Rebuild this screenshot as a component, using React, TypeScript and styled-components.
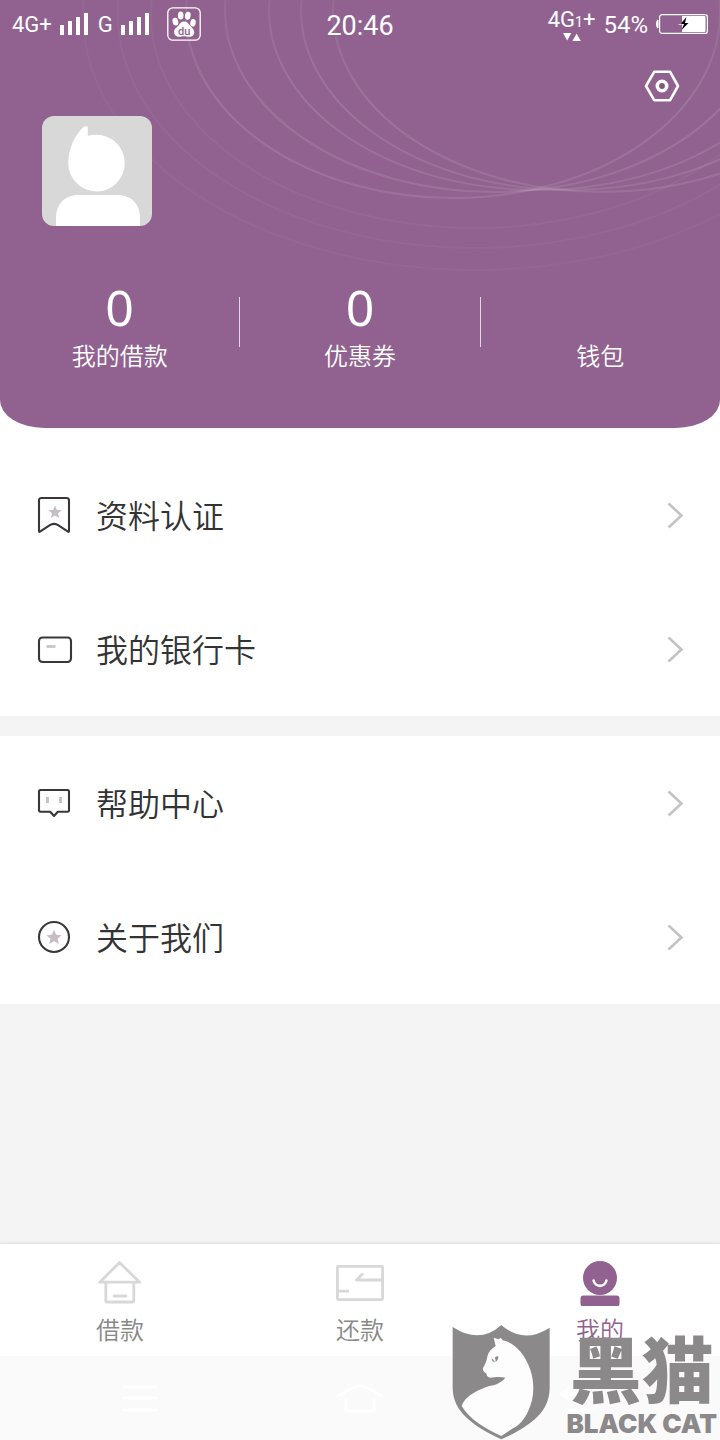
import React from 'react';
import styled, { createGlobalStyle } from 'styled-components';

const purple = '#91628f';
const ink = '#333333';
const cjk = '"Noto Sans CJK SC", sans-serif';
const latin = 'Roboto, Inter, sans-serif';

const GlobalStyle = createGlobalStyle`
  *, *::before, *::after { box-sizing: border-box; }
  body { margin: 0; background: #f4f4f4; font-family: ${cjk}; }
  a { color: inherit; text-decoration: none; }
  button { border: 0; padding: 0; background: none; color: inherit; font: inherit; cursor: pointer; }
  svg { display: block; flex: none; }
`;

const Page = styled.div`
  position: relative;
  display: flex;
  flex-direction: column;
  min-height: 100vh;
  overflow: hidden;
`;

const HeaderBackdrop = styled.div`
  background: #ffffff;
`;

const Header = styled.header`
  position: relative;
  overflow: hidden;
  padding-bottom: 57px;
  border-radius: 0 0 44px 44px / 0 0 28px 28px;
  background: ${purple};
  color: #ffffff;
`;

const Rings = styled.svg`
  position: absolute;
  inset: 0;
  width: 100%;
  height: 100%;
`;

const StatusBar = styled.div`
  position: relative;
  display: grid;
  grid-template-columns: 1fr auto 1fr;
  align-items: center;
  height: 48px;
  padding: 0 12px;
  font-family: ${latin};
  font-size: 24px;
  line-height: 28px;
`;

const StatusGroup = styled.div<{ $end?: boolean }>`
  display: flex;
  align-items: center;
  justify-content: ${(p) => (p.$end ? 'flex-end' : 'flex-start')};
  gap: ${(p) => (p.$end ? 8 : 10)}px;
`;

const StatusText = styled.span`
  padding-top: 2px;
`;

const Signal = styled.span`
  display: flex;
  align-items: center;
  gap: 8px;
  font-size: 22px;
`;

const AppBadge = styled.span`
  padding-left: 8px;
`;

const Clock = styled.time`
  padding-top: 4px;
  font-size: 27px;
`;

const Network = styled.div`
  display: flex;
  flex-direction: column;
  align-items: center;
  font-size: 22px;
  line-height: 22px;
`;

const NetworkIndex = styled.span`
  font-size: 14px;
`;

const SettingsRow = styled.div`
  position: relative;
  display: flex;
  justify-content: flex-end;
  padding: 22px 40px 14px;
`;

const Avatar = styled.div`
  position: relative;
  width: 110px;
  height: 110px;
  margin-left: 42px;
  border-radius: 12px;
  background: #d8d8d8;
  overflow: hidden;
`;

const Stats = styled.nav`
  position: relative;
  display: flex;
  margin-top: 55px;
`;

const Stat = styled.a`
  display: flex;
  flex: 1;
  flex-direction: column;
  gap: 8px;
  align-items: center;
`;

const StatValue = styled.span`
  height: 50px;
  font-family: "Noto Sans", sans-serif;
  font-size: 50px;
  font-weight: 400;
  line-height: 52px;
`;

const StatLabel = styled.span`
  font-size: 24px;
  font-weight: 350;
  line-height: 32px;
`;

const Divider = styled.span`
  width: 1px;
  height: 50px;
  margin-top: 16px;
  background: rgba(255, 255, 255, 0.75);
`;

const Menu = styled.nav<{ $first?: boolean }>`
  margin-bottom: 20px;
  padding-top: ${(p) => (p.$first ? 20 : 0)}px;
  background: #ffffff;
`;

const MenuItem = styled.a`
  display: flex;
  align-items: center;
  gap: 22px;
  height: 134px;
  padding: 0 36px;
`;

const MenuLabel = styled.span`
  flex: 1;
  padding-bottom: 2px;
  color: ${ink};
  font-size: 32px;
  font-weight: 350;
  line-height: 48px;
`;

const TabBar = styled.nav`
  display: flex;
  height: 112px;
  margin-top: auto;
  background: #ffffff;
  box-shadow: 0 -1px 3px rgba(0, 0, 0, 0.1);
`;

const Tab = styled.button<{ $active?: boolean }>`
  display: flex;
  flex: 1;
  flex-direction: column;
  align-items: center;
  gap: 7px;
  padding: 14px 0 11px;
  color: ${(p) => (p.$active ? purple : '#888888')};
  font-size: 24px;
  font-weight: 350;
  line-height: 32px;
`;

const SystemNav = styled.div`
  display: flex;
  align-items: center;
  justify-content: space-between;
  height: 84px;
  padding: 0 116px;
  background: #fafafa;
`;

const Watermark = styled.div`
  position: absolute;
  right: 3px;
  bottom: 0;
  display: flex;
  gap: 17px;
  color: #8b898a;
  pointer-events: none;
`;

const WatermarkText = styled.div`
  display: flex;
  flex-direction: column;
  align-items: center;
`;

const WatermarkName = styled.span`
  font-size: 72px;
  font-weight: 900;
  line-height: 84px;
`;

const WatermarkLatin = styled.span`
  font-family: Inter, sans-serif;
  font-size: 26px;
  font-weight: 900;
  line-height: 32px;
`;

const innerRings = [
  { cx: 453, cy: 13, rx: 267, ry: 185 },
  { cx: 494, cy: 10, rx: 269, ry: 182 },
  { cx: 538, cy: 10, rx: 269, ry: 180 },
  { cx: 570, cy: 10, rx: 269, ry: 180 },
  { cx: 602, cy: 10, rx: 269, ry: 182 },
];

const outerRings = [
  { rx: 324, ry: 213, o: 0.04 },
  { rx: 357, ry: 233, o: 0.04 },
  { rx: 392, ry: 255, o: 0.03 },
];

const HeaderRings = () => (
  <Rings viewBox="0 0 720 428" preserveAspectRatio="xMidYMin slice" fill="none" stroke="#ffffff" strokeWidth="2" aria-hidden="true">
    <defs>
      <linearGradient id="ring" x1="0" y1="0" x2="0" y2="200" gradientUnits="userSpaceOnUse">
        <stop offset="0" stopColor="#fff" stopOpacity="0.06" />
        <stop offset="0.5" stopColor="#fff" stopOpacity="0.11" />
        <stop offset="1" stopColor="#fff" stopOpacity="0.09" />
      </linearGradient>
    </defs>
    {innerRings.map((r) => (
      <ellipse key={r.cx} {...r} stroke="url(#ring)" />
    ))}
    {outerRings.map(({ rx, ry, o }) => (
      <ellipse key={rx} cx="475" cy="15" rx={rx} ry={ry} strokeOpacity={o} />
    ))}
  </Rings>
);

const SignalIcon = () => (
  <svg width="28" height="22" viewBox="0 0 28 22" fill="currentColor" aria-hidden="true">
    <path d="M0 12h4v10H0zM8 8h4v14H8zM16 4h4v18h-4zM24 0h4v22h-4z" />
  </svg>
);

const PawIcon = () => (
  <svg width="34" height="34" viewBox="0 0 34 34" fill="currentColor" role="img" aria-label="Baidu">
    <rect x="0.8" y="0.8" width="32.4" height="32.4" rx="5" fill="none" stroke="currentColor" strokeWidth="1.3" />
    <ellipse cx="8.4" cy="14.6" rx="2.8" ry="3.9" transform="rotate(-14 8.4 14.6)" />
    <ellipse cx="13.7" cy="8.6" rx="2.8" ry="4" />
    <ellipse cx="20.8" cy="8.8" rx="2.8" ry="4" transform="rotate(10 20.8 8.8)" />
    <ellipse cx="26" cy="15.8" rx="2.7" ry="3.8" transform="rotate(8 26 15.8)" />
    <path d="M17 14.500c3 0 4.300 2 6 4 1.700 2 4.200 3.500 4.200 6.500 0 3.500-2.700 5-5.600 4.800-1.800-.1-2.900-.5-4.700-.5s-3 .5-4.800.5c-3 0-5-1.800-5-4.800 0-3.200 2.500-4.400 4.400-6.500 1.500-1.700 2.500-4 5.500-4z" />
    <text x="17.200" y="27.500" textAnchor="middle" fontFamily="Roboto, sans-serif" fontSize="11" fontWeight="500" fill={purple}>du</text>
  </svg>
);

const TrafficIcon = () => (
  <svg width="18" height="8" viewBox="0 0 18 8" fill="currentColor" aria-hidden="true">
    <path d="M0 0h8.400L4.200 7.500zM9.400 8h8.400L13.600 .5z" />
  </svg>
);

const BatteryIcon = () => (
  <svg width="52" height="20" viewBox="0 0 52 20" aria-hidden="true">
    <path d="M2 6v8C.6 13.600 .6 12 .6 10S.6 6.400 2 6z" fill="#fff" stroke="#fff" />
    <rect x="3.600" y="0.600" width="47.800" height="18.800" rx="2.500" fill="none" stroke="#fff" strokeWidth="1.200" />
    <path d="M26 2h22.500q1 0 1 1v14q0 1-1 1H26z" fill="#fff" />
    <path d="M30.500 3L24.500 10h3.500l-2.500 6 7-7h-3.600z" fill="#000" />
    <path d="M25.500 9.500l-4 1.200h4z" fill="#fff" />
  </svg>
);

const SettingsIcon = () => (
  <svg width="36" height="32" viewBox="0 0 36 32" fill="none" stroke="#ffffff" aria-hidden="true">
    <path d="M10.200 1.800h15.900L34 16l-7.900 14.200H10.200L2 16z" strokeWidth="2.600" strokeLinejoin="round" />
    <circle cx="18" cy="16" r="4.700" strokeWidth="3.600" fill="#7d5a7d" />
  </svg>
);

const AvatarIcon = () => (
  <svg width="110" height="110" viewBox="0 0 110 110" fill="#ffffff" aria-hidden="true">
    <path d="M45.800 11.500V19.800Q50 18.800 54.500 18.800A28.300 28.300 0 1 1 26.200 47.500C26.200 32 34 17 42 10.800Q45.500 8.800 45.800 11.500z" />
    <path d="M14 110v-8c0-14 9-23 22-23h40c13 0 22 9 22 23v8z" />
  </svg>
);

const starPath = 'M0-6.800L1.900-2.300 6.600-1.900 3 1.100 4.200 5.700 0 3.200-4.200 5.700-3 1.100-6.600-1.900-1.900-2.300z';

const BookmarkIcon = () => (
  <svg width="38" height="38" viewBox="0 0 38 38" fill="none" aria-hidden="true">
    <path d="M5.500 2H30.500Q33 2 33 4.500V35.300Q33 36.200 32 35.600L22.500 29.300Q18 26.500 13.500 29.300L4 35.600Q3 36.200 3 35.300V4.500Q3 2 5.500 2z" stroke="#39373a" strokeWidth="2.100" />
    <path d={starPath} transform="translate(19 16.200)" fill="#c5bec4" />
  </svg>
);

const CardIcon = () => (
  <svg width="38" height="38" viewBox="0 0 38 38" fill="none" aria-hidden="true">
    <rect x="3" y="7.500" width="32" height="24.500" rx="3.500" stroke="#39373a" strokeWidth="2.100" />
    <path d="M10.500 16.500h9" stroke="#c5c2c5" strokeWidth="2.600" />
  </svg>
);

const HelpIcon = () => (
  <svg width="38" height="38" viewBox="0 0 38 38" fill="none" aria-hidden="true">
    <path d="M4.500 6h27Q33 6 33 7.500v18.500q0 1.700-1.500 1.700H21.800L18 32l-3.800-4.300H4.500Q3 27.700 3 26v-18.500Q3 6 4.500 6z" stroke="#39373a" strokeWidth="2.100" strokeLinejoin="round" />
    <path d="M11.500 13v6M24.500 13v6" stroke="#c5c0c5" strokeWidth="2.800" />
  </svg>
);

const AboutIcon = () => (
  <svg width="38" height="38" viewBox="0 0 38 38" fill="none" aria-hidden="true">
    <circle cx="18" cy="19" r="15" stroke="#39373a" strokeWidth="2.100" />
    <path d={starPath} transform="translate(18 19.500) scale(1.150)" fill="#c5bec4" />
  </svg>
);

const ChevronIcon = () => (
  <svg width="18" height="28" viewBox="0 0 18 28" fill="none" stroke="#c3c3c3" strokeWidth="2.600" aria-hidden="true">
    <path d="M2.500 2.500l13 12-13 12" />
  </svg>
);

const LoanIcon = () => (
  <svg width="48" height="48" viewBox="0 0 48 48" fill="none" stroke="#d8d8d8" strokeWidth="2.800" strokeLinejoin="round" strokeLinecap="round" aria-hidden="true">
    <path d="M23.500 4.500L3.800 24.200h39.800zM9.800 25v17.500q0 1.500 1.500 1.500h25q1.500 0 1.500-1.500V25" />
    <path d="M18 38h12" />
  </svg>
);

const RepayIcon = () => (
  <svg width="48" height="48" viewBox="0 0 48 48" fill="none" stroke="#d8d8d8" strokeWidth="2.800" strokeLinejoin="round" aria-hidden="true">
    <rect x="1.400" y="8.400" width="45.200" height="33.200" rx="1" />
    <path d="M46 22H20.500l6.500-6.500M2 33.200h11" />
  </svg>
);

const MineIcon = () => (
  <svg width="48" height="48" viewBox="0 0 48 48" fill="currentColor" aria-hidden="true">
    <circle cx="24" cy="20" r="17" />
    <rect x="4.500" y="37.500" width="39" height="11" rx="3" />
    <path d="M17.600 22.500a6.500 6.500 0 0 0 12.800 0" fill="none" stroke="#ffffff" strokeWidth="2.600" strokeLinecap="round" />
  </svg>
);

const SystemMenuIcon = () => (
  <svg width="48" height="48" viewBox="0 0 48 48" stroke="#ffffff" strokeWidth="3" aria-hidden="true">
    <path d="M7 13h34M7 24h34M7 36h34" />
  </svg>
);

const SystemHomeIcon = () => (
  <svg width="48" height="48" viewBox="0 0 48 48" fill="none" stroke="#ffffff" strokeWidth="3" aria-hidden="true">
    <path d="M2 22l14-8q8-4 16 0l14 8M10 24v13h28V24" />
  </svg>
);

const SystemBackIcon = () => (
  <svg width="48" height="48" viewBox="0 0 48 48" fill="none" stroke="#ffffff" strokeWidth="3" aria-hidden="true">
    <path d="M14 14l-8 6 8 6M7 20h26q8 0 8 8t-8 8H12" />
  </svg>
);

const CatShield = () => (
  <svg width="98" height="116" viewBox="62 283 294 348" aria-hidden="true">
    <path d="M64 292Q145 345 210 286Q275 345 355 294V474C354 535 320 579 210 629C104 579 65 535 64 474z" fill="currentColor" />
    <path d="M187 324L202 329 208 324 214 332C250 338 280 372 297 420C312 465 307 510 291 543C279 570 262 588 245 596L210 619C163 598 116 570 91 529C100 502 128 486 171 470C192 466 211 459 222 444C205 440 190 443 178 444C169 443 165 438 166 432C158 428 153 421 155 415C162 402 166 394 168 381C172 365 181 357 193 349z" fill="#fdfdfd" />
    <path d="M181 386Q187 389 190 397Q181 397 181 386zM190 384Q198 378 201 381Q202 390 192 397Q195 389 190 384z" fill="currentColor" />
  </svg>
);

const MenuRow = ({ icon, label }: { icon: React.ReactNode; label: string }) => (
  <MenuItem href="#">
    {icon}
    <MenuLabel>{label}</MenuLabel>
    <ChevronIcon />
  </MenuItem>
);

export default function App() {
  return (
    <>
      <GlobalStyle />
      <Page>
        <HeaderBackdrop>
          <Header>
            <HeaderRings />
            <StatusBar>
              <StatusGroup>
                <Signal>
                  <StatusText>4G+</StatusText>
                  <SignalIcon />
                </Signal>
                <Signal>
                  <StatusText>G</StatusText>
                  <SignalIcon />
                </Signal>
                <AppBadge>
                  <PawIcon />
                </AppBadge>
              </StatusGroup>
              <Clock>20:46</Clock>
              <StatusGroup $end>
                <Network>
                  <StatusText>4G<NetworkIndex>1</NetworkIndex>+</StatusText>
                  <TrafficIcon />
                </Network>
                <StatusText>54%</StatusText>
                <BatteryIcon />
              </StatusGroup>
            </StatusBar>
            <SettingsRow>
              <button type="button" aria-label="设置">
                <SettingsIcon />
              </button>
            </SettingsRow>
            <Avatar>
              <AvatarIcon />
            </Avatar>
            <Stats>
              <Stat href="#">
                <StatValue>0</StatValue>
                <StatLabel>我的借款</StatLabel>
              </Stat>
              <Divider />
              <Stat href="#">
                <StatValue>0</StatValue>
                <StatLabel>优惠券</StatLabel>
              </Stat>
              <Divider />
              <Stat href="#">
                <StatValue />
                <StatLabel>钱包</StatLabel>
              </Stat>
            </Stats>
          </Header>
        </HeaderBackdrop>
        <Menu $first>
          <MenuRow icon={<BookmarkIcon />} label="资料认证" />
          <MenuRow icon={<CardIcon />} label="我的银行卡" />
        </Menu>
        <Menu>
          <MenuRow icon={<HelpIcon />} label="帮助中心" />
          <MenuRow icon={<AboutIcon />} label="关于我们" />
        </Menu>
        <TabBar>
          <Tab type="button">
            <LoanIcon />
            借款
          </Tab>
          <Tab type="button">
            <RepayIcon />
            还款
          </Tab>
          <Tab type="button" $active>
            <MineIcon />
            我的
          </Tab>
        </TabBar>
        <SystemNav>
          <SystemMenuIcon />
          <SystemHomeIcon />
          <SystemBackIcon />
        </SystemNav>
        <Watermark>
          <CatShield />
          <WatermarkText>
            <WatermarkName>黑猫</WatermarkName>
            <WatermarkLatin>BLACK CAT</WatermarkLatin>
          </WatermarkText>
        </Watermark>
      </Page>
    </>
  );
}
